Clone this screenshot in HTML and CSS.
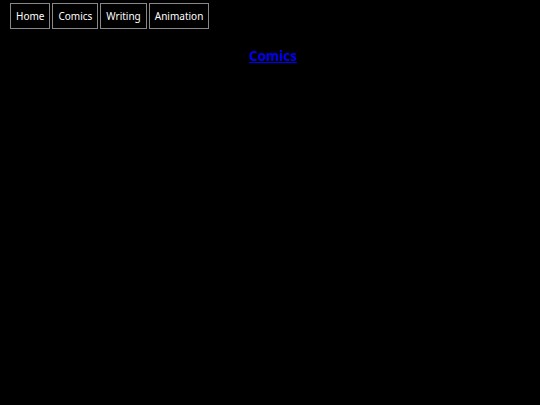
FILE: index.html
```html
<!DOCTYPE html>
<html>
<head>
<meta charset="utf-8">
<link rel="stylesheet" href="styles.css">
</head>
<body>
<nav class="nav">
<a class="nav-item" href="#">Home</a>
<a class="nav-item" href="#">Comics</a>
<a class="nav-item" href="#">Writing</a>
<a class="nav-item" href="#">Animation</a>
</nav>
<h1 class="title"><a href="#" class="title-link">Comics</a></h1>
</body>
</html>
```
FILE: styles.css
```css
html, body {
  margin: 0;
  background: #000;
  font-family: "Noto Sans", sans-serif;
}
.nav {
  display: flex;
  gap: 2px;
  padding: 3px 10px 0;
}
.nav-item {
  display: block;
  border: 1px solid #888;
  color: #fff;
  text-decoration: none;
  font-size: 10px;
  line-height: 15px;
  padding: 5px 5px 4px;
}
.title {
  margin: 17px 0 0;
  padding-left: 6px;
  text-align: center;
  font-size: 13.5px;
  line-height: 20px;
  font-weight: bold;
}
.title-link {
  color: #0000ee;
}
```
